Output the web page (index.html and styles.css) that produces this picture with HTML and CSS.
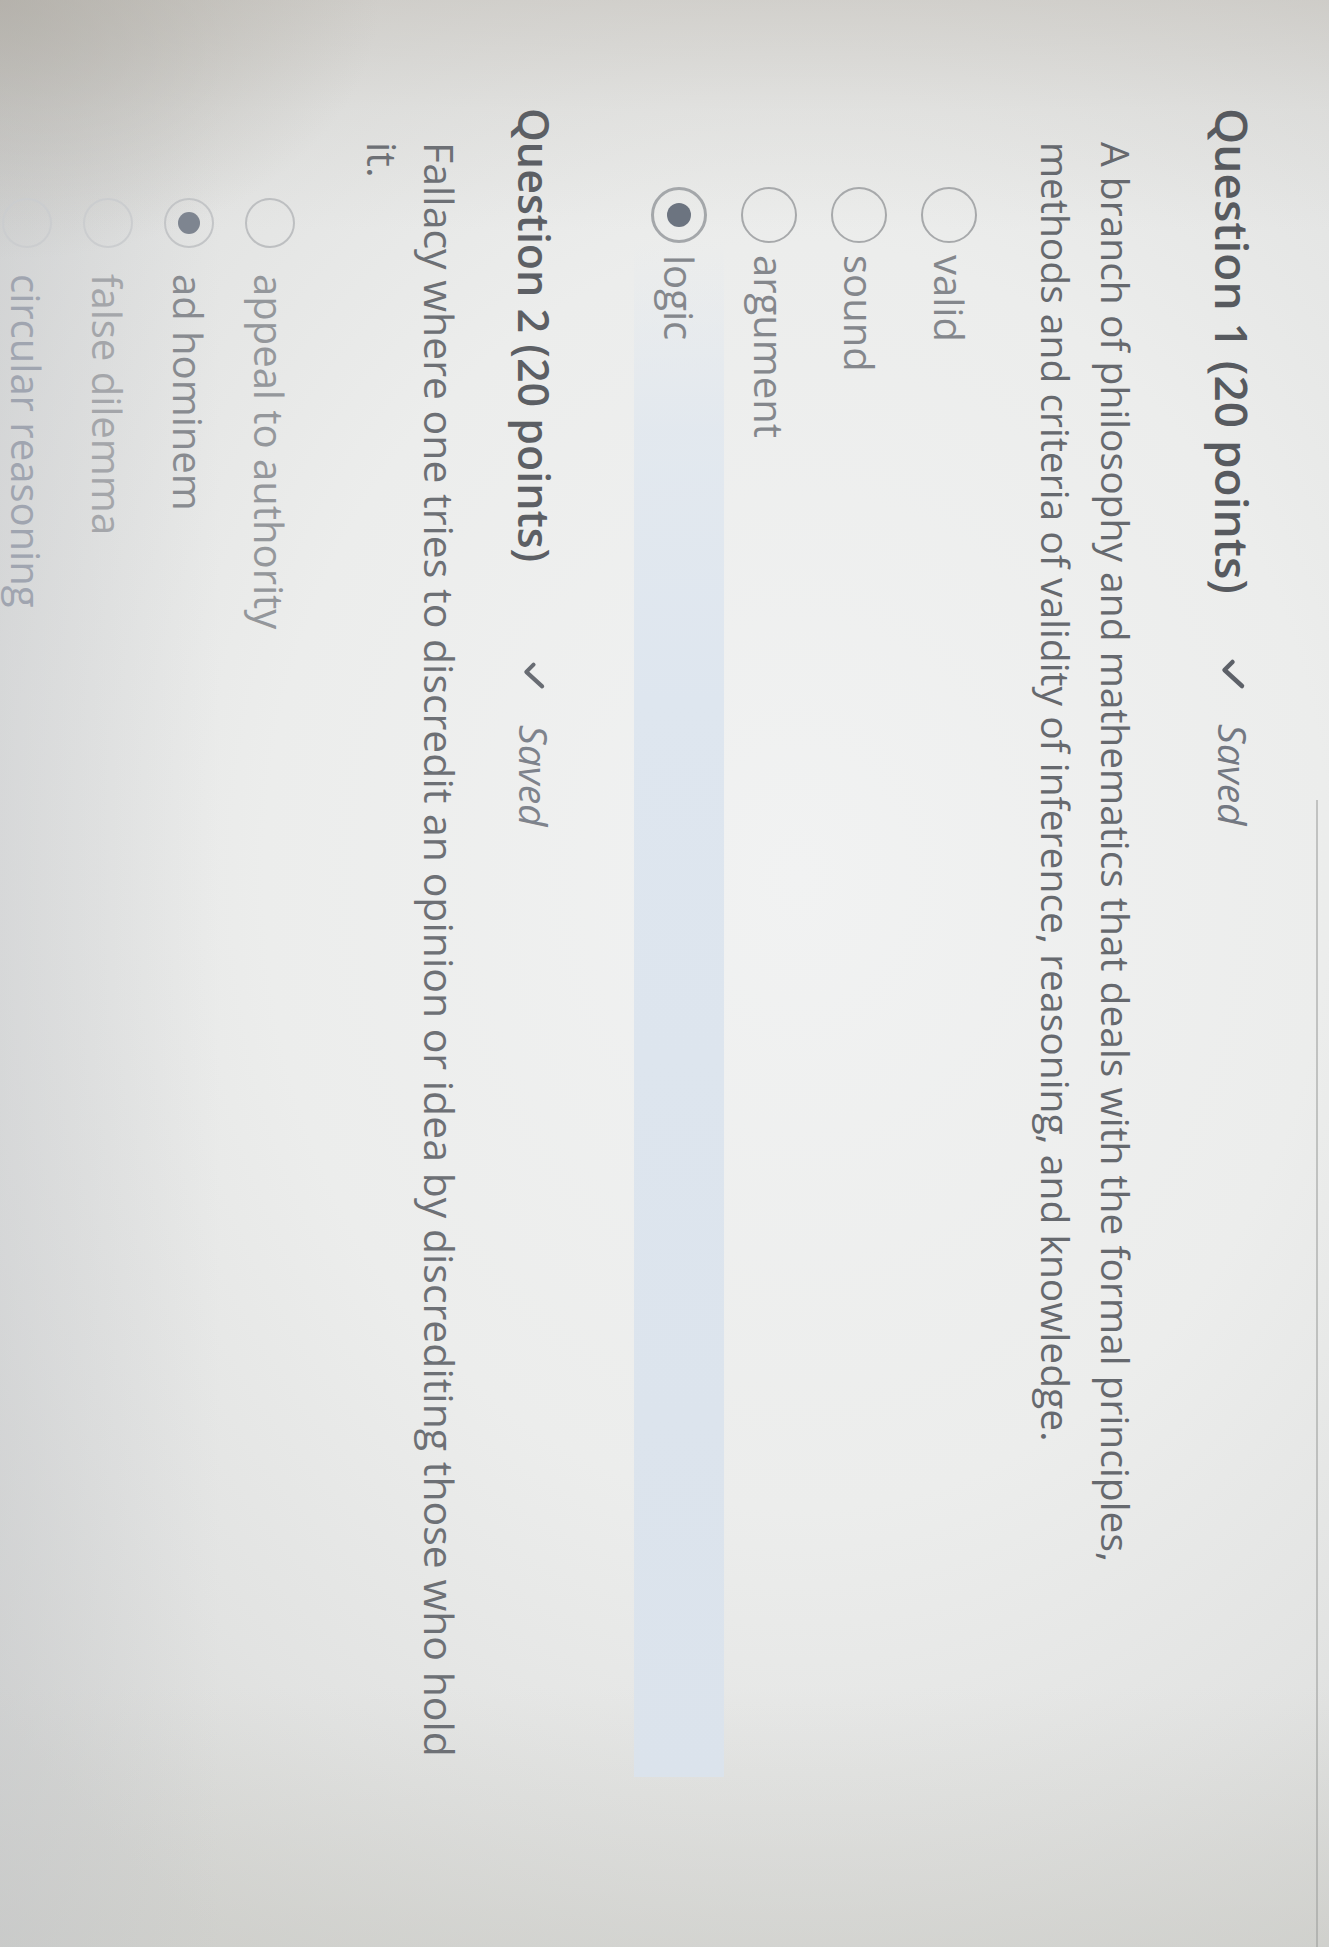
FILE: index.html
```html
<!DOCTYPE html>
<html lang="en">
<head>
<meta charset="utf-8">
<title>Quiz</title>
<link rel="stylesheet" href="styles.css">
</head>
<body>
<div class="stage">
  <div class="edge"></div>
  <section class="q q1">
    <div class="q-head">
      <h2 class="q-title">Question 1 (20 points)</h2>
      <span class="saved">
        <svg class="check" viewBox="0 0 28 32" aria-hidden="true"><path d="M13.5 4 L5.5 12 L23 28"/></svg>
        <span class="saved-text">Saved</span>
      </span>
    </div>
    <p class="q-text">A branch of philosophy and mathematics that deals with the formal principles,<br>methods and criteria of validity of inference, reasoning, and knowledge.</p>
    <ul class="opts">
      <li class="opt"><span class="radio"></span><span class="label">valid</span></li>
      <li class="opt"><span class="radio"></span><span class="label">sound</span></li>
      <li class="opt"><span class="radio"></span><span class="label">argument</span></li>
      <li class="opt selected"><span class="radio"></span><span class="label">logic</span></li>
    </ul>
  </section>
  <section class="q q2">
    <div class="q-head">
      <h2 class="q-title">Question 2 (20 points)</h2>
      <span class="saved">
        <svg class="check" viewBox="0 0 28 32" aria-hidden="true"><path d="M13.5 4 L5.5 12 L23 28"/></svg>
        <span class="saved-text">Saved</span>
      </span>
    </div>
    <p class="q-text">Fallacy where one tries to discredit an opinion or idea by discrediting those who hold<br>it.</p>
    <ul class="opts">
      <li class="opt o1"><span class="radio"></span><span class="label">appeal to authority</span></li>
      <li class="opt o2 selected"><span class="radio"></span><span class="label">ad hominem</span></li>
      <li class="opt o3"><span class="radio"></span><span class="label">false dilemma</span></li>
      <li class="opt o4"><span class="radio"></span><span class="label">circular reasoning</span></li>
    </ul>
  </section>
</div>
</body>
</html>
```

FILE: styles.css
```css
html, body {
  margin: 0;
  padding: 0;
  overflow: hidden;
}

body {
  width: 1329px;
  height: 1947px;
  font-family: "Open Sans", "Liberation Sans", sans-serif;
  background:
    radial-gradient(ellipse 380px 260px at 0px 0px, rgba(170, 166, 158, 0.6), rgba(170, 166, 158, 0)),
    linear-gradient(to bottom, rgba(185, 180, 172, 0.45) 0px, rgba(195, 192, 186, 0.2) 110px, rgba(0, 0, 0, 0) 230px),
    linear-gradient(to right, rgba(190, 192, 196, 0.35) 0px, rgba(0, 0, 0, 0) 220px),
    linear-gradient(to top, rgba(196, 196, 190, 0.45) 0px, rgba(0, 0, 0, 0) 260px),
    radial-gradient(ellipse 80% 65% at 60% 45%, #f1f2f2 0%, #ecedec 50%, #e2e3e2 80%, #d9dad8 100%);
}

/* The photographed screen is turned a quarter turn: text runs top to bottom,
   lines stack from right to left. */
.stage {
  writing-mode: vertical-rl;
  block-size: 1329px;
  inline-size: 1947px;
  display: flex;
  flex-direction: column;
}

.edge {
  margin-block-start: 11px;
  margin-inline-start: 800px;
  block-size: 0;
  border-block-start: 2px solid rgba(150, 151, 150, 0.5);
}

.q {
  display: flex;
  flex-direction: column;
}

.q-head {
  display: flex;
  align-items: center;
}

.q-title {
  margin: 0;
  font-weight: 600;
  color: #575a5f;
}

.saved {
  display: flex;
  align-items: center;
}

.check {
  width: 28px;
  height: 32px;
  fill: none;
  stroke: #5d6168;
  stroke-width: 4.5;
  stroke-linecap: round;
  stroke-linejoin: round;
}

.saved-text {
  font-style: italic;
  color: #737882;
}

.q-text {
  margin: 0;
  color: #66696e;
  white-space: nowrap;
}

.opts {
  list-style: none;
  margin: 0;
  padding: 0;
  display: flex;
  flex-direction: column;
}

.opt {
  display: flex;
  align-items: center;
}

.radio {
  box-sizing: border-box;
  border-radius: 50%;
  border: 2px solid #a7a9ab;
  display: flex;
  align-items: center;
  justify-content: center;
  flex: none;
}

.selected .radio::after {
  content: "";
  border-radius: 50%;
  background: #6c7480;
}

.label {
  color: #84878c;
}

/* Question 1 */
.q1 {
  margin-block-start: 53px;
}

.q1 .q-head {
  margin-inline-start: 108px;
  block-size: 60px;
}

.q1 .q-title {
  font-size: 46px;
  line-height: 60px;
}

.q1 .saved {
  margin-inline-start: 64px;
}

.q1 .saved-text {
  margin-inline-start: 34px;
  font-size: 39px;
}

.q1 .q-text {
  margin-block-start: 57px;
  margin-inline-start: 142px;
  font-size: 39px;
  line-height: 60px;
}

.q1 .opts {
  margin-block-start: 32px;
}

.q1 .opt {
  block-size: 90px;
  padding-inline-start: 187px;
}

.q1 .radio {
  width: 56px;
  height: 56px;
}

.q1 .selected .radio {
  border: 3px solid #a4a7aa;
}

.q1 .selected .radio::after {
  width: 24px;
  height: 24px;
}

.q1 .label {
  margin-inline-start: 12px;
  font-size: 40px;
}

.q1 .opt.selected {
  margin-inline-end: 170px;
  background: linear-gradient(to bottom, rgba(222, 230, 239, 0) 240px, rgba(222, 230, 239, 0.7) 430px, #dee6ef 700px, #dbe3ec 100%);
}

/* Question 2 */
.q2 {
  margin-block-start: 72px;
}

.q2 .q-head {
  margin-inline-start: 108px;
  block-size: 56px;
}

.q2 .q-title {
  font-size: 43px;
  line-height: 56px;
  color: #5c5f64;
}

.q2 .saved {
  margin-inline-start: 99px;
}

.q2 .check {
  width: 26px;
  height: 29px;
  stroke: #686c73;
}

.q2 .saved-text {
  margin-inline-start: 35px;
  font-size: 39px;
  color: #7e838c;
}

.q2 .q-text {
  margin-block-start: 38px;
  margin-inline-start: 142px;
  font-size: 41px;
  line-height: 57px;
  color: #6d7075;
}

.q2 .opts {
  margin-block-start: 44px;
}

.q2 .opt {
  block-size: 81px;
  padding-inline-start: 198px;
}

.q2 .radio {
  width: 50px;
  height: 50px;
  border-color: #bdbfc1;
}

.q2 .selected .radio {
  border-color: #c3c5c7;
}

.q2 .selected .radio::after {
  width: 22px;
  height: 22px;
  background: #7e8590;
}

.q2 .label {
  margin-inline-start: 26px;
  font-size: 40px;
}

.q2 .o1 .label { color: #94979b; }
.q2 .o2 .label { color: #888b90; }
.q2 .o3 .label { color: #a4a6aa; }
.q2 .o4 .label { color: #a0a5b0; }
.q2 .o3 .radio, .q2 .o4 .radio { border-color: #cbcdcf; }
```
